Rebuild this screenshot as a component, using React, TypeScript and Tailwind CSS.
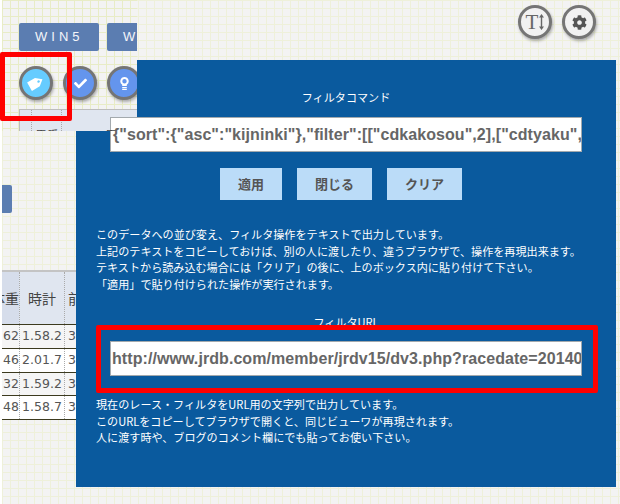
import { FaCog, FaCheck } from 'react-icons/fa';

const sans = 'font-["Liberation_Sans",sans-serif]';
const jp = 'font-["Noto_Sans_CJK_JP","Liberation_Sans",sans-serif]';

const rows = [
  { w: '62', time: '1.58.2', bg: 'bg-[#f5f5f5]' },
  { w: '46', time: '2.01.7', bg: 'bg-white' },
  { w: '32', time: '1.59.2', bg: 'bg-[#f5f5f5]' },
  { w: '48', time: '1.58.7', bg: 'bg-white' },
];

const text1 = [
  'このデータへの並び変え、フィルタ操作をテキストで出力しています。',
  '上記のテキストをコピーしておけば、別の人に渡したり、違うブラウザで、操作を再現出来ます。',
  'テキストから読み込む場合には「クリア」の後に、上のボックス内に貼り付けて下さい。',
  '「適用」で貼り付けられた操作が実行されます。',
];

const text2 = [
  '現在のレース・フィルタをURL用の文字列で出力しています。',
  'このURLをコピーしてブラウザで開くと、同じビューワが再現されます。',
  '人に渡す時や、ブログのコメント欄にでも貼ってお使い下さい。',
];

function Circle({ className, children }: { className: string; children: React.ReactNode }) {
  return (
    <div className={`flex h-[34px] w-[34px] shrink-0 items-center justify-center rounded-full border-[3px] border-[#757575] shadow-[1px_2px_3px_rgba(0,0,0,0.3)] ${className}`}>
      {children}
    </div>
  );
}

function Btn({ label, w }: { label: string; w: string }) {
  return (
    <button className={`flex h-[32px] items-center justify-center bg-[#bbdcf8] text-[13px] font-bold text-[#555] ${w}`}>
      {label}
    </button>
  );
}

function TextBox({ value, pad }: { value: string; pad: string }) {
  return (
    <div className={`relative z-20 flex h-[35px] w-[472px] shrink-0 items-center overflow-hidden whitespace-nowrap border border-[#a3a9ad] bg-white text-[16px] font-bold tracking-[0.07px] text-[#666] ${pad} ${sans}`}>
      {value}
    </div>
  );
}

function WinButton() {
  return (
    <div className={`flex h-[28px] w-[80px] shrink-0 items-center rounded-[2px] bg-[#5b7db1] pl-[16px] text-[13px] tracking-[4px] text-[#f4f6fa] ${sans}`}>
      WIN5
    </div>
  );
}

export default function App() {
  return (
    <div className={`relative h-[504px] w-[620px] overflow-hidden bg-white pl-[2px] ${jp}`}>
      <div className="h-full w-full bg-[#f3f3f3] bg-[linear-gradient(#eef0da_1px,transparent_1px),linear-gradient(90deg,#eef0da_1px,transparent_1px)] bg-[size:8px_8px]">
        {/* page under the dialog */}
        <div className="flex justify-end gap-[10px] pr-[24px] pt-[5px]">
          <Circle className="bg-[#f1f1f1]">
            <span className="flex items-center text-[#666]">
              <span className='font-["Liberation_Serif",serif] text-[21px] leading-none'>T</span>
              <svg width="5" height="16" viewBox="0 0 5 16" fill="#666" className="ml-[1px]">
                <path d="M2.5 0 5 3.5H3.2v9H5L2.5 16 0 12.5h1.8v-9H0z" />
              </svg>
            </span>
          </Circle>
          <Circle className="bg-[#f1f1f1]">
            <FaCog className="text-[15px] text-[#555]" />
          </Circle>
        </div>

        <div className="mt-[146px] h-[28px] w-[10px] rounded-r-[2px] bg-[#5b7db1]" />

        <div className='mt-[57px] w-[200px] font-["DejaVu_Sans",sans-serif] text-[12.5px] text-[#555]'>
          <div className="flex h-[54px] items-center border-t-2 border-[#c4c4c4] bg-[#e0e6f0] text-[#444]">
            <div className={`flex h-full w-[17px] items-center justify-end overflow-hidden bg-[#d6ddeb] text-[14px] ${jp}`}>
              <span className="whitespace-nowrap">馬体重</span>
            </div>
            <div className={`flex h-full w-[46px] items-center justify-center border-x border-dotted border-[#aaa] text-[14px] ${jp}`}>時計</div>
            <div className={`whitespace-nowrap pl-[3px] text-[14px] ${jp}`}>前半</div>
          </div>
          {rows.map((r) => (
            <div key={r.time} className={`flex h-[23.75px] items-center border-t border-[#3c3a1e] ${r.bg}`}>
              <div className="flex h-full w-[17px] items-center justify-end overflow-hidden">{r.w}</div>
              <div className="flex h-full w-[46px] items-center justify-center border-x border-dotted border-[#aaa]">{r.time}</div>
              <div className="pl-[3px]">3</div>
            </div>
          ))}
          <div className="border-t border-[#3c3a1e]" />
        </div>
      </div>

      {/* dialog */}
      <div className="absolute left-[76px] top-[60px] flex h-[427px] w-[540px] flex-col items-start bg-[#0a5a9e] pl-[20px] text-white">
        <div className="mt-[29px] w-[500px] text-center text-[11.1px] leading-[17px]">フィルタコマンド</div>
        <div className="ml-[14px] mt-[11px]">
          <TextBox pad="pl-[2px]" value={'{"sort":{"asc":"kijninki"},"filter":[["cdkakosou",2],["cdtyaku",[1,2,3]]]}'} />
        </div>
        <div className="ml-[124px] mt-[16px] flex gap-[15px]">
          <Btn label="適用" w="w-[62px]" />
          <Btn label="閉じる" w="w-[75px]" />
          <Btn label="クリア" w="w-[75px]" />
        </div>
        <div className="mt-[26px] text-[11.1px] leading-[16.7px]">
          {text1.map((t) => (
            <div key={t} className="whitespace-nowrap">{t}</div>
          ))}
        </div>
        <div className="mt-[21px] w-[500px] text-center text-[11.1px] leading-[17px]">フィルタURL</div>
        <div className="relative mt-[-6px] flex h-[68px] w-[502px] items-center rounded-[2px] border-[5px] border-[#ff0000] pl-[9px]">
          <TextBox pad="pl-[1px]" value="http://www.jrdb.com/member/jrdv15/dv3.php?racedate=20140928" />
        </div>
        <div className="mt-[3px] text-[11.1px] leading-[16.7px]">
          {text2.map((t) => (
            <div key={t} className="whitespace-nowrap">{t}</div>
          ))}
        </div>
      </div>

      {/* top left fragment pasted over the dialog */}
      <div className="absolute left-[2px] top-0 z-10 h-[131px] w-[135px] overflow-hidden bg-[#f3f3f3] bg-[linear-gradient(#e8ecc6_1px,transparent_1px),linear-gradient(90deg,#e8ecc6_1px,transparent_1px)] bg-[size:8px_8px] pl-[17px] pt-[23px]">
        <div className="flex gap-[8px]">
          <WinButton />
          <WinButton />
        </div>
        <div className="mt-[15px] flex gap-[10px]">
          <Circle className="bg-[#66ccff]">
            <svg width="18" height="16" viewBox="0 0 16 15" fill="white">
              <g transform="rotate(-30 8 7.5)">
                <path
                  fillRule="evenodd"
                  d="M1 3h8.5L15 7.5 9.5 12H1zM10.8 6.3a1.2 1.2 0 1 0 0 2.4 1.2 1.2 0 0 0 0-2.4z"
                />
              </g>
            </svg>
          </Circle>
          <Circle className="bg-[#6495ed]">
            <FaCheck className="text-[13px] text-white" />
          </Circle>
          <Circle className="bg-[#6495ed]">
            <svg width="9" height="13" viewBox="0 0 9 13" fill="white">
              <path
                fillRule="evenodd"
                d="M4.5 0a4.2 4.2 0 0 1 2.3 7.7V9H2.2V7.7A4.2 4.2 0 0 1 4.5 0zm0 2a2.2 2.2 0 1 0 0 4.4 2.2 2.2 0 0 0 0-4.4z"
              />
              <rect x="2.2" y="10" width="4.6" height="1.2" />
              <rect x="2.2" y="11.8" width="4.6" height="1.2" />
            </svg>
          </Circle>
        </div>
        <div className="mt-[9px] flex h-[40px] w-[160px] border-l border-t border-[#bdbdbd] bg-[#e0e6f0]">
          <div className="h-full w-[12px] border-r border-dotted border-[#aaa]" />
          <div className="h-full w-[30px] border-r border-dotted border-[#aaa]" />
        </div>
      </div>

      {/* tops of the header labels that show through */}
      <div className="absolute left-[35px] top-[128px] z-30 h-[3px] overflow-hidden whitespace-nowrap text-[12px] leading-[14px] text-[#444]">馬番</div>
      <div className="absolute left-[105px] top-[128px] z-30 h-[3px] overflow-hidden whitespace-nowrap text-[12px] leading-[14px] text-[#444]">馬</div>

      {/* red highlight on the tag button */}
      <div className="absolute left-0 top-[52px] z-30 h-[69px] w-[72px] rounded-[2px] border-[5px] border-[#ff0000]" />
    </div>
  );
}
